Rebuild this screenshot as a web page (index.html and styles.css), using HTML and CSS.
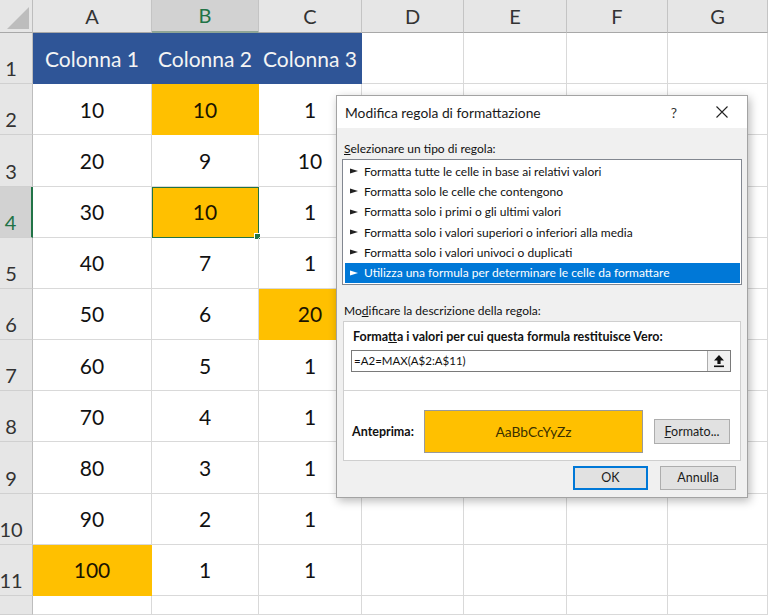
FILE: index.html
```html
<!DOCTYPE html>
<html lang="it">
<head>
<meta charset="utf-8">
<title>Modifica regola di formattazione</title>
<link rel="stylesheet" href="styles.css">
</head>
<body>
<div class="sheet">
  <div class="corner"><span class="tri"></span></div>
  <div class="ch">A</div><div class="ch ch-sel">B</div><div class="ch">C</div><div class="ch">D</div><div class="ch">E</div><div class="ch">F</div><div class="ch">G</div>

  <div class="rh">1</div><div class="c hdr">Colonna 1</div><div class="c hdr">Colonna 2</div><div class="c hdr">Colonna 3</div><div class="c"></div><div class="c"></div><div class="c"></div><div class="c"></div>
  <div class="rh">2</div><div class="c">10</div><div class="c hl">10</div><div class="c">1</div><div class="c"></div><div class="c"></div><div class="c"></div><div class="c"></div>
  <div class="rh">3</div><div class="c">20</div><div class="c">9</div><div class="c">10</div><div class="c"></div><div class="c"></div><div class="c"></div><div class="c"></div>
  <div class="rh rh-sel">4</div><div class="c">30</div><div class="c hl active">10<span class="handle"></span></div><div class="c">1</div><div class="c"></div><div class="c"></div><div class="c"></div><div class="c"></div>
  <div class="rh">5</div><div class="c">40</div><div class="c">7</div><div class="c">1</div><div class="c"></div><div class="c"></div><div class="c"></div><div class="c"></div>
  <div class="rh">6</div><div class="c">50</div><div class="c">6</div><div class="c hl">20</div><div class="c"></div><div class="c"></div><div class="c"></div><div class="c"></div>
  <div class="rh">7</div><div class="c">60</div><div class="c">5</div><div class="c">1</div><div class="c"></div><div class="c"></div><div class="c"></div><div class="c"></div>
  <div class="rh">8</div><div class="c">70</div><div class="c">4</div><div class="c">1</div><div class="c"></div><div class="c"></div><div class="c"></div><div class="c"></div>
  <div class="rh">9</div><div class="c">80</div><div class="c">3</div><div class="c">1</div><div class="c"></div><div class="c"></div><div class="c"></div><div class="c"></div>
  <div class="rh">10</div><div class="c">90</div><div class="c">2</div><div class="c">1</div><div class="c"></div><div class="c"></div><div class="c"></div><div class="c"></div>
  <div class="rh">11</div><div class="c hl">100</div><div class="c">1</div><div class="c">1</div><div class="c"></div><div class="c"></div><div class="c"></div><div class="c"></div>
  <div class="rh"></div><div class="c"></div><div class="c"></div><div class="c"></div><div class="c"></div><div class="c"></div><div class="c"></div><div class="c"></div>
</div>

<div class="dlg">
  <div class="dlg-title">
    <span class="title-text">Modifica regola di formattazione</span>
    <span class="help">?</span>
    <svg class="close" width="12" height="12" viewBox="0 0 12 12"><path d="M0.5 0.5 L11.5 11.5 M11.5 0.5 L0.5 11.5" stroke="#222" stroke-width="1.1" fill="none"/></svg>
  </div>
  <div class="dlg-body">
    <div class="lbl"><u>S</u>elezionare un tipo di regola:</div>
    <div class="list">
      <div class="item"><svg class="arr" width="8" height="6" viewBox="0 0 8 6"><path d="M0 0.5 L8 3 L0 5.5 Z" fill="currentColor"/></svg>Formatta tutte le celle in base ai relativi valori</div>
      <div class="item"><svg class="arr" width="8" height="6" viewBox="0 0 8 6"><path d="M0 0.5 L8 3 L0 5.5 Z" fill="currentColor"/></svg>Formatta solo le celle che contengono</div>
      <div class="item"><svg class="arr" width="8" height="6" viewBox="0 0 8 6"><path d="M0 0.5 L8 3 L0 5.5 Z" fill="currentColor"/></svg>Formatta solo i primi o gli ultimi valori</div>
      <div class="item"><svg class="arr" width="8" height="6" viewBox="0 0 8 6"><path d="M0 0.5 L8 3 L0 5.5 Z" fill="currentColor"/></svg>Formatta solo i valori superiori o inferiori alla media</div>
      <div class="item"><svg class="arr" width="8" height="6" viewBox="0 0 8 6"><path d="M0 0.5 L8 3 L0 5.5 Z" fill="currentColor"/></svg>Formatta solo i valori univoci o duplicati</div>
      <div class="item item-sel"><svg class="arr" width="8" height="6" viewBox="0 0 8 6"><path d="M0 0.5 L8 3 L0 5.5 Z" fill="currentColor"/></svg>Utilizza una formula per determinare le celle da formattare</div>
    </div>
    <div class="lbl lbl2">Mo<u>d</u>ificare la descrizione della regola:</div>
    <div class="group">
      <div class="g-top">
        <div class="blbl blbl-top">Forma<u>t</u>ta i valori per cui questa formula restituisce Vero:</div>
        <div class="input">
          <span class="val">=A2=MAX(A$2:A$11)</span>
          <span class="ref-btn"><svg width="12" height="14" viewBox="0 0 12 14"><path d="M6 1 L11 6.5 L7.6 6.5 L7.6 10 L4.4 10 L4.4 6.5 L1 6.5 Z" fill="#111"/><rect x="1" y="11.5" width="10" height="1.6" fill="#111"/></svg></span>
        </div>
      </div>
      <div class="g-bottom">
        <span class="blbl prev-lbl">Anteprima:</span>
        <div class="preview">AaBbCcYyZz</div>
        <button class="btn btn-fmt"><u>F</u>ormato...</button>
      </div>
    </div>
    <div class="actions">
      <button class="btn btn-act btn-ok">OK</button>
      <button class="btn btn-act">Annulla</button>
    </div>
  </div>
</div>
</body>
</html>
```

FILE: styles.css
```css
html, body {
  margin: 0;
  padding: 0;
  background: #ffffff;
  overflow: hidden;
}

body {
  width: 768px;
  height: 615px;
  position: relative;
  font-family: Lato, "Open Sans", sans-serif;
}

.sheet {
  display: grid;
  grid-template-columns: 33px 119px 107px 103px 102px 103px 101px 100px;
  grid-template-rows: 33px repeat(11, 51.18px) 19px;
  width: 768px;
  height: 615px;
}

.corner {
  background: #e6e6e6;
  border-right: 1px solid #bdbdbd;
  border-bottom: 1px solid #a8a8a8;
  box-sizing: border-box;
  position: relative;
}

.tri {
  position: absolute;
  right: 3px;
  bottom: 3px;
  width: 0;
  height: 0;
  border-left: 22px solid transparent;
  border-bottom: 22px solid #bdbdbd;
}

.ch {
  background: #e6e6e6;
  border-right: 1px solid #c4c4c4;
  border-bottom: 1px solid #a8a8a8;
  box-sizing: border-box;
  display: flex;
  align-items: center;
  justify-content: center;
  font-size: 20px;
  color: #333;
  padding-bottom: 1px;
}

.ch-sel {
  background: #d2d2d2;
  color: #217346;
  border-bottom: 2px solid #8fa596;
}

.rh {
  background: #e6e6e6;
  border-right: 1px solid #bdbdbd;
  border-bottom: 1px solid #d0d0d0;
  box-sizing: border-box;
  display: flex;
  align-items: flex-end;
  justify-content: center;
  padding-right: 10px;
  padding-bottom: 3px;
  font-size: 20px;
  color: #333;
}

.rh-sel {
  background: #d2d2d2;
  color: #217346;
  border-right: 2px solid #217346;
}

.c {
  border-right: 1px solid #d9d9d9;
  border-bottom: 1px solid #d9d9d9;
  box-sizing: border-box;
  display: flex;
  align-items: center;
  justify-content: center;
  font-size: 21px;
  color: #111;
  position: relative;
}

.hdr {
  background: #2f5597;
  border-color: #2f5597;
  color: #f4f4f4;
}

.hl {
  background: #ffc000;
  border-color: #ffc000;
  color: #1a1400;
}

.active {
  outline: 1.5px solid #217346;
  outline-offset: -1px;
}

.handle {
  position: absolute;
  right: -3px;
  bottom: -3px;
  width: 5px;
  height: 5px;
  background: #217346;
  border: 1px solid #fff;
}

/* Dialog */
.dlg {
  position: absolute;
  left: 336px;
  top: 95px;
  width: 412px;
  height: 403px;
  box-sizing: border-box;
  border: 1px solid #a3a3a3;
  background: #f0f0f0;
  box-shadow: 2px 3px 9px rgba(0, 0, 0, 0.28);
  font-family: Lato, "Open Sans", sans-serif;
  font-size: 12px;
  color: #111;
  display: flex;
  flex-direction: column;
}

.dlg-title {
  height: 32px;
  background: #ffffff;
  display: flex;
  align-items: center;
  padding-left: 8px;
  padding-right: 19px;
}

.title-text {
  font-size: 13.8px;
  flex: 1;
  color: #1a1a1a;
}

.help {
  font-size: 14px;
  margin-right: 39px;
  color: #333;
}

.close {
  display: block;
}

.dlg-body {
  flex: 1;
  display: flex;
  flex-direction: column;
  padding: 13px 11px 0 5px;
}

.lbl {
  line-height: 16px;
  padding-left: 2px;
}

.list {
  margin-top: 2px;
  width: 400px;
  box-sizing: border-box;
  border: 1px solid #828790;
  background: #ffffff;
  padding: 1px 1px 1px 2px;
}

.item {
  height: 20.33px;
  display: flex;
  align-items: center;
  padding-left: 5px;
  white-space: nowrap;
  color: #111;
}

.arr {
  margin-right: 6px;
  color: #222;
}

.item-sel {
  background: #0078d7;
  color: #ffffff;
}

.item-sel .arr {
  color: #ffffff;
}

.lbl2 {
  margin-top: 18px;
}

.group {
  margin-top: 2px;
  margin-left: 1px;
  width: 398px;
  height: 140px;
  box-sizing: border-box;
  border: 1px solid #cfcfcf;
  background: #ffffff;
  display: flex;
  flex-direction: column;
}

.g-top {
  height: 69px;
  box-sizing: border-box;
  padding: 7px 9px 0 7px;
  border-bottom: 1px solid #d4d4d4;
}

.blbl {
  font-weight: 700;
  font-size: 12.5px;
  line-height: 16px;
  white-space: nowrap;
}

.blbl-top {
  margin-left: 2px;
}

.input {
  margin-top: 5px;
  width: 380px;
  height: 22px;
  box-sizing: border-box;
  border: 1px solid #7a7a7a;
  display: flex;
  align-items: center;
  background: #fff;
}

.val {
  flex: 1;
  padding-left: 2px;
  font-size: 11.5px;
}

.ref-btn {
  width: 23px;
  height: 20px;
  box-sizing: border-box;
  border-left: 1px solid #adadad;
  background: #f0f0f0;
  display: flex;
  align-items: center;
  justify-content: center;
}

.g-bottom {
  flex: 1;
  display: flex;
  align-items: center;
  padding: 13px 0 0 8px;
}

.prev-lbl {
  width: 72px;
}

.preview {
  width: 219px;
  height: 43px;
  box-sizing: border-box;
  border: 1px solid #9a9a9a;
  background: #ffc000;
  display: flex;
  align-items: center;
  justify-content: center;
  font-size: 13.8px;
  color: #3a3000;
}

.btn {
  font-family: Lato, "Open Sans", sans-serif;
  font-size: 12.5px;
  color: #1b1b1b;
  background: #e1e1e1;
  border: 1px solid #adadad;
  padding: 0;
  margin: 0;
  box-sizing: border-box;
}

.btn-fmt {
  width: 76px;
  height: 25px;
  margin-left: 11px;
}

.actions {
  margin-top: 5px;
  display: flex;
  justify-content: flex-end;
  gap: 12px;
}

.btn-act {
  width: 76px;
  height: 24px;
}

.btn-ok {
  width: 75px;
  border: 1px solid #0078d7;
  box-shadow: inset 0 0 0 1px #0078d7;
}
```
